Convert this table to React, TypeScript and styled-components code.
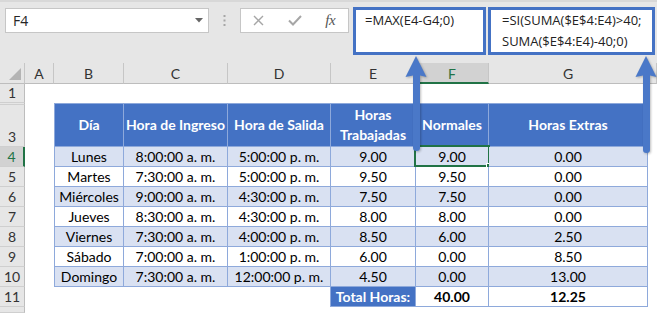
import React from "react";
import styled, { createGlobalStyle } from "styled-components";

const GlobalStyle = createGlobalStyle`
  html, body { margin: 0; padding: 0; background: #ffffff; }
  body { width: 657px; height: 313px; overflow: hidden; font-family: Lato, "Liberation Sans", sans-serif; }
  *, *::before, *::after { box-sizing: border-box; }
`;

const BLUE = "#4472c4";
const LINE = "#8ea9db";
const ALT = "#d9e1f2";
const GREEN = "#217346";

const Page = styled.div`
  position: relative;
  width: 657px;
  height: 313px;
  overflow: hidden;
  background: #ffffff;
`;

const TopBar = styled.div`
  display: flex;
  align-items: flex-start;
  height: 63px;
  padding: 5px 0 0 5px;
  background: #e6e6e6;
  border-top: 2px solid #d8d8d8;
`;

const NameBox = styled.div`
  display: flex;
  align-items: center;
  justify-content: space-between;
  width: 204px;
  height: 25px;
  margin-top: 1px;
  padding: 0 5px 0 7px;
  background: #ffffff;
  border: 1px solid #c6c6c6;
  font-family: "Open Sans", "Liberation Sans", sans-serif;
  font-size: 14px;
  color: #262626;
`;

const DotsBox = styled.div`
  display: flex;
  justify-content: center;
  align-items: center;
  width: 31px;
  height: 25px;
  margin-top: 1px;
`;

const FxButtons = styled.div`
  display: flex;
  width: 109px;
  height: 25px;
  margin-top: 1px;
  background: #ffffff;
  border: 1px solid #c6c6c6;
`;

const FxSlot = styled.div`
  flex: 1;
  display: flex;
  align-items: center;
  justify-content: center;
`;

const FxText = styled.span`
  font-family: "Liberation Serif", "DejaVu Serif", serif;
  font-style: italic;
  font-size: 15px;
  color: #555555;
  letter-spacing: -0.5px;
`;

const Callout = styled.div<{ $w: number; $gap: number; $pad: number }>`
  width: ${(p) => p.$w}px;
  height: 48px;
  margin-left: ${(p) => p.$gap}px;
  padding: 0 0 0 ${(p) => p.$pad}px;
  background: #ffffff;
  border: 3px solid ${BLUE};
  font-family: "Open Sans", "Liberation Sans", sans-serif;
  font-size: 13px;
  line-height: 21px;
  color: #222222;
  white-space: nowrap;
`;

const Sheet = styled.div`
  display: grid;
  grid-template-columns: 25px 1fr;
  grid-template-rows: 21px 1fr;
  height: 250px;
`;

const Corner = styled.div`
  display: flex;
  align-items: flex-end;
  justify-content: flex-end;
  padding: 0 3px 3px 0;
  background: #e6e6e6;
  border-right: 1px solid #c6c6c6;
  border-bottom: 1px solid #bdbdbd;
`;

const ColHeaders = styled.div`
  display: flex;
`;

const ColHead = styled.div<{ $w?: number; $active?: boolean }>`
  ${(p) => (p.$w ? `width: ${p.$w}px; flex: none;` : "flex: 1;")}
  display: flex;
  align-items: center;
  justify-content: center;
  height: 21px;
  padding-top: ${(p) => (p.$active ? "1px" : "0")};
  background: ${(p) => (p.$active ? "#d2d2d2" : "#e6e6e6")};
  border-right: 1px solid #c6c6c6;
  border-bottom: ${(p) => (p.$active ? `2px solid ${GREEN}` : "1px solid #bdbdbd")};
  font-size: 14px;
  color: ${(p) => (p.$active ? GREEN : "#333333")};
`;

const RowHeaders = styled.div`
  display: flex;
  flex-direction: column;
`;

const RowHead = styled.div<{ $h?: number; $active?: boolean; $bottom?: boolean }>`
  ${(p) => (p.$h !== undefined ? `height: ${p.$h}px; flex: none;` : "flex: 1;")}
  display: flex;
  align-items: ${(p) => (p.$bottom ? "flex-end" : "center")};
  justify-content: center;
  padding-bottom: ${(p) => (p.$bottom ? "0" : "0")};
  background: ${(p) => (p.$active ? "#d2d2d2" : "#e6e6e6")};
  border-bottom: 1px solid #cfcfcf;
  border-right: ${(p) => (p.$active ? `2px solid ${GREEN}` : "1px solid #bdbdbd")};
  font-size: 14px;
  line-height: 18px;
  color: ${(p) => (p.$active ? GREEN : "#333333")};
`;

const Canvas = styled.div`
  padding: 19px 0 0 29px;
  background: #ffffff;
`;

const DataTable = styled.div`
  display: grid;
  grid-template-columns: 70px 104px 103px 85px 73px 159px;
  grid-template-rows: 44px repeat(8, 20px);
`;

const HeadCell = styled.div<{ $first?: boolean }>`
  display: flex;
  align-items: center;
  justify-content: center;
  text-align: center;
  background: ${BLUE};
  border-top: 1px solid ${LINE};
  border-bottom: 1px solid ${LINE};
  border-right: 1px solid ${LINE};
  border-left: ${(p) => (p.$first ? `1px solid ${LINE}` : "none")};
  color: #ffffff;
  font-weight: 700;
  font-size: 14px;
  line-height: 20px;
  white-space: nowrap;
`;

const BodyCell = styled.div<{ $alt?: boolean; $first?: boolean; $bold?: boolean }>`
  position: relative;
  display: flex;
  align-items: center;
  justify-content: center;
  background: ${(p) => (p.$alt ? ALT : "#ffffff")};
  border-bottom: 1px solid ${LINE};
  border-right: 1px solid ${LINE};
  border-left: ${(p) => (p.$first ? `1px solid ${LINE}` : "none")};
  color: #000000;
  font-size: 14px;
  font-weight: ${(p) => (p.$bold ? 700 : 400)};
  white-space: nowrap;
`;

const BlankCell = styled.div<{ $edge?: boolean }>`
  border-right: ${(p) => (p.$edge ? `1px solid ${LINE}` : "none")};
`;

const TotalLabel = styled.div`
  display: flex;
  align-items: center;
  justify-content: center;
  background: ${BLUE};
  border-bottom: 1px solid ${LINE};
  border-right: 1px solid ${LINE};
  color: #ffffff;
  font-weight: 700;
  font-size: 14px;
  white-space: nowrap;
`;

const Selection = styled.div`
  position: absolute;
  left: -2px;
  right: -2px;
  top: -2px;
  bottom: -1px;
  border: 2px solid ${GREEN};
  pointer-events: none;
`;

const Handle = styled.div`
  position: absolute;
  right: -4px;
  bottom: -4px;
  width: 6px;
  height: 6px;
  background: ${GREEN};
  border: 1px solid #ffffff;
`;

const ArrowSvg = styled.svg<{ $x: number; $y: number }>`
  position: absolute;
  left: ${(p) => p.$x}px;
  top: ${(p) => p.$y}px;
  overflow: visible;
  filter: drop-shadow(1px 1px 1px rgba(0, 0, 0, 0.25));
`;

type Row = [string, string, string, string, string, string];

const rows: Row[] = [
  ["Lunes", "8:00:00 a. m.", "5:00:00 p. m.", "9.00", "9.00", "0.00"],
  ["Martes", "7:30:00 a. m.", "5:00:00 p. m.", "9.50", "9.50", "0.00"],
  ["Miércoles", "9:00:00 a. m.", "4:30:00 p. m.", "7.50", "7.50", "0.00"],
  ["Jueves", "8:30:00 a. m.", "4:30:00 p. m.", "8.00", "8.00", "0.00"],
  ["Viernes", "7:30:00 a. m.", "4:00:00 p. m.", "8.50", "6.00", "2.50"],
  ["Sábado", "7:00:00 a. m.", "1:00:00 p. m.", "6.00", "0.00", "8.50"],
  ["Domingo", "7:30:00 a. m.", "12:00:00 p. m.", "4.50", "0.00", "13.00"],
];

const cols: { label: string; w?: number }[] = [
  { label: "A", w: 29 },
  { label: "B", w: 70 },
  { label: "C", w: 104 },
  { label: "D", w: 103 },
  { label: "E", w: 85 },
  { label: "F", w: 73 },
  { label: "G", w: 159 },
  { label: "" },
];

function Arrow({ x, y, len }: { x: number; y: number; len: number }) {
  return (
    <ArrowSvg $x={x} $y={y} width={22} height={len} viewBox={`0 0 22 ${len}`}>
      <path
        d={`M11 0 L21.5 21 L15 19.5 L15 ${len - 3} Q15 ${len} 11.5 ${len} Q8 ${len} 8 ${len - 3} L8 19.5 L0.5 21 Z`}
        fill="#4a78c8"
      />
    </ArrowSvg>
  );
}

export default function App() {
  return (
    <Page>
      <GlobalStyle />
      <TopBar>
        <NameBox>
          <span>F4</span>
          <svg width="8" height="5" viewBox="0 0 8 5">
            <polygon points="0,0 8,0 4,4.5" fill="#666666" />
          </svg>
        </NameBox>
        <DotsBox>
          <svg width="3" height="12" viewBox="0 0 3 12">
            <rect x="0.5" y="0" width="2" height="2" fill="#a6a6a6" />
            <rect x="0.5" y="4.5" width="2" height="2" fill="#a6a6a6" />
            <rect x="0.5" y="9" width="2" height="2" fill="#a6a6a6" />
          </svg>
        </DotsBox>
        <FxButtons>
          <FxSlot>
            <svg width="11" height="11" viewBox="0 0 11 11">
              <path d="M1 1 L10 10 M10 1 L1 10" stroke="#a6a6a6" strokeWidth="1.4" fill="none" />
            </svg>
          </FxSlot>
          <FxSlot>
            <svg width="14" height="11" viewBox="0 0 14 11">
              <path d="M1 5.5 L5 9.5 L13 1" stroke="#a6a6a6" strokeWidth="2" fill="none" />
            </svg>
          </FxSlot>
          <FxSlot>
            <FxText>fx</FxText>
          </FxSlot>
        </FxButtons>
        <Callout $w={133} $gap={4} $pad={9}>
          =MAX(E4-G4;0)
        </Callout>
        <Callout $w={167} $gap={2} $pad={11}>
          =SI(SUMA($E$4:E4)&gt;40;
          <br />
          SUMA($E$4:E4)-40;0)
        </Callout>
      </TopBar>
      <Sheet>
        <Corner>
          <svg width="12" height="12" viewBox="0 0 12 12">
            <polygon points="12,0 12,12 0,12" fill="#b4b4b4" />
          </svg>
        </Corner>
        <ColHeaders>
          {cols.map((c, i) => (
            <ColHead key={i} $w={c.w} $active={c.label === "F"}>
              {c.label}
            </ColHead>
          ))}
        </ColHeaders>
        <RowHeaders>
          <RowHead $h={19}>1</RowHead>
          <RowHead $h={2} />
          <RowHead $h={42} $bottom>
            3
          </RowHead>
          {[4, 5, 6, 7, 8, 9, 10, 11].map((n) => (
            <RowHead key={n} $h={20} $active={n === 4}>
              {n}
            </RowHead>
          ))}
          <RowHead />
        </RowHeaders>
        <Canvas>
          <DataTable>
            <HeadCell $first>Día</HeadCell>
            <HeadCell>Hora de Ingreso</HeadCell>
            <HeadCell>Hora de Salida</HeadCell>
            <HeadCell>
              Horas
              <br />
              Trabajadas
            </HeadCell>
            <HeadCell>Normales</HeadCell>
            <HeadCell>Horas Extras</HeadCell>
            {rows.map((r, ri) =>
              r.map((v, ci) => (
                <BodyCell key={`${ri}-${ci}`} $alt={ri % 2 === 0} $first={ci === 0}>
                  {v}
                  {ri === 0 && ci === 4 && (
                    <Selection>
                      <Handle />
                    </Selection>
                  )}
                </BodyCell>
              ))
            )}
            <BlankCell />
            <BlankCell />
            <BlankCell $edge />
            <TotalLabel>Total Horas:</TotalLabel>
            <BodyCell $bold>40.00</BodyCell>
            <BodyCell $bold>12.25</BodyCell>
          </DataTable>
        </Canvas>
      </Sheet>
      <Arrow x={405} y={56} len={95} />
      <Arrow x={635} y={56} len={97} />
    </Page>
  );
}
